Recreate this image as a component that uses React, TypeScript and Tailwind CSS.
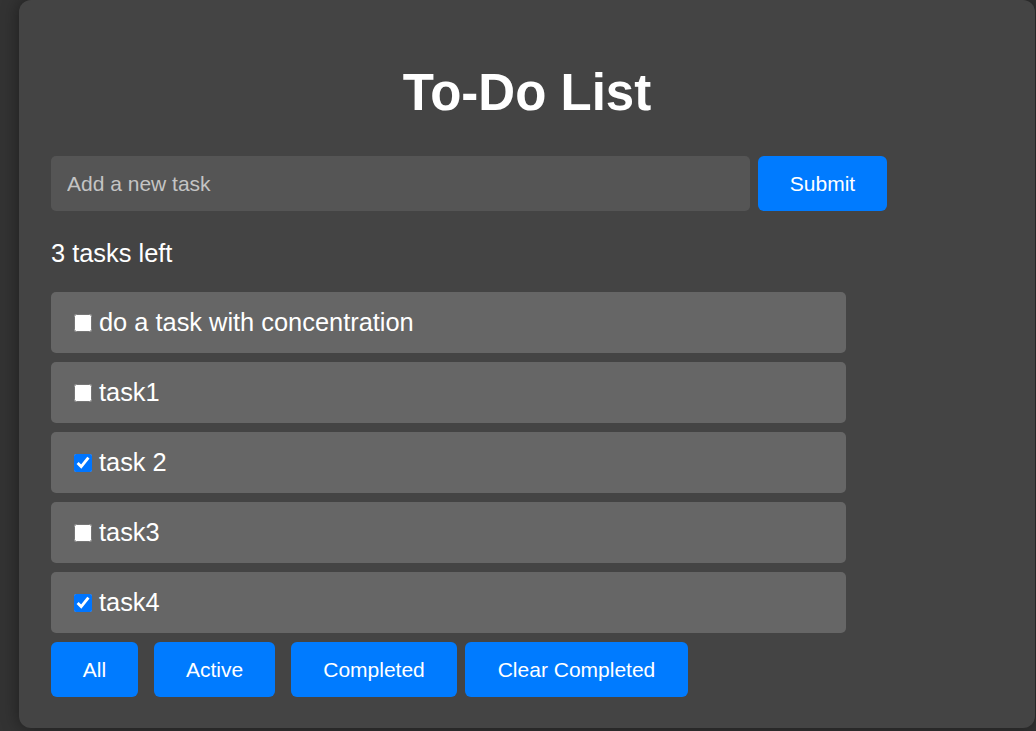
import { useState } from 'react'

interface Task {
  id: number
  text: string
  done: boolean
}

const INITIAL: Task[] = [
  { id: 1, text: 'do a task with concentration', done: false },
  { id: 2, text: 'task1', done: false },
  { id: 3, text: 'task 2', done: true },
  { id: 4, text: 'task3', done: false },
  { id: 5, text: 'task4', done: true },
]

export default function App() {
  const [tasks, setTasks] = useState<Task[]>(INITIAL)
  const [novo, setNovo] = useState('')

  const restantes = tasks.filter(t => !t.done).length

  function toggle(id: number) {
    setTasks(ts => ts.map(t => (t.id === id ? { ...t, done: !t.done } : t)))
  }

  function submit() {
    if (!novo.trim()) return
    setTasks(ts => [...ts, { id: Date.now(), text: novo.trim(), done: false }])
    setNovo('')
  }

  return (
    <div
      className="min-h-[731px] bg-[#333333] pl-[19px]"
      style={{ fontFamily: '"Liberation Sans", Arial, sans-serif' }}
    >
      <div className="w-[1016px] h-[728px] rounded-[12px] bg-[#444444] shadow-[0_0_18px_rgba(0,0,0,0.45)] px-8 pt-[68px]">
        <h1 className="text-center text-white font-bold text-[51px] leading-[50px]">To-Do List</h1>

        <div className="flex gap-2 mt-[38px]">
          <input
            value={novo}
            onChange={e => setNovo(e.target.value)}
            placeholder="Add a new task"
            className="w-[699px] h-[55px] rounded-[5px] bg-[#555555] px-4 text-[21px] text-white placeholder:text-[#c4c4c4] outline-none"
          />
          <button
            onClick={submit}
            className="w-[129px] h-[55px] rounded-[6px] bg-[#007bff] text-white text-[21px]"
          >
            Submit
          </button>
        </div>

        <p className="mt-[30px] text-white text-[25.4px] leading-[25px]">{restantes} tasks left</p>

        <ul className="mt-[26px] flex flex-col gap-[9px] w-[795px]">
          {tasks.map(t => (
            <li
              key={t.id}
              className="h-[61px] rounded-[5px] bg-[#666666] flex items-center pl-[23px] gap-[7px] text-white text-[25.4px]"
            >
              <input
                type="checkbox"
                checked={t.done}
                onChange={() => toggle(t.id)}
                className="w-[18px] h-[18px] m-0"
              />
              <span>{t.text}</span>
            </li>
          ))}
        </ul>

        <div className="flex mt-[9px] text-white text-[21px]">
          <button className="w-[87px] h-[55px] rounded-[6px] bg-[#007bff] mr-4">All</button>
          <button className="w-[121px] h-[55px] rounded-[6px] bg-[#007bff] mr-4">Active</button>
          <button className="w-[166px] h-[55px] rounded-[6px] bg-[#007bff] mr-2">Completed</button>
          <button
            onClick={() => setTasks(ts => ts.filter(t => !t.done))}
            className="w-[223px] h-[55px] rounded-[6px] bg-[#007bff]"
          >
            Clear Completed
          </button>
        </div>
      </div>
    </div>
  )
}
